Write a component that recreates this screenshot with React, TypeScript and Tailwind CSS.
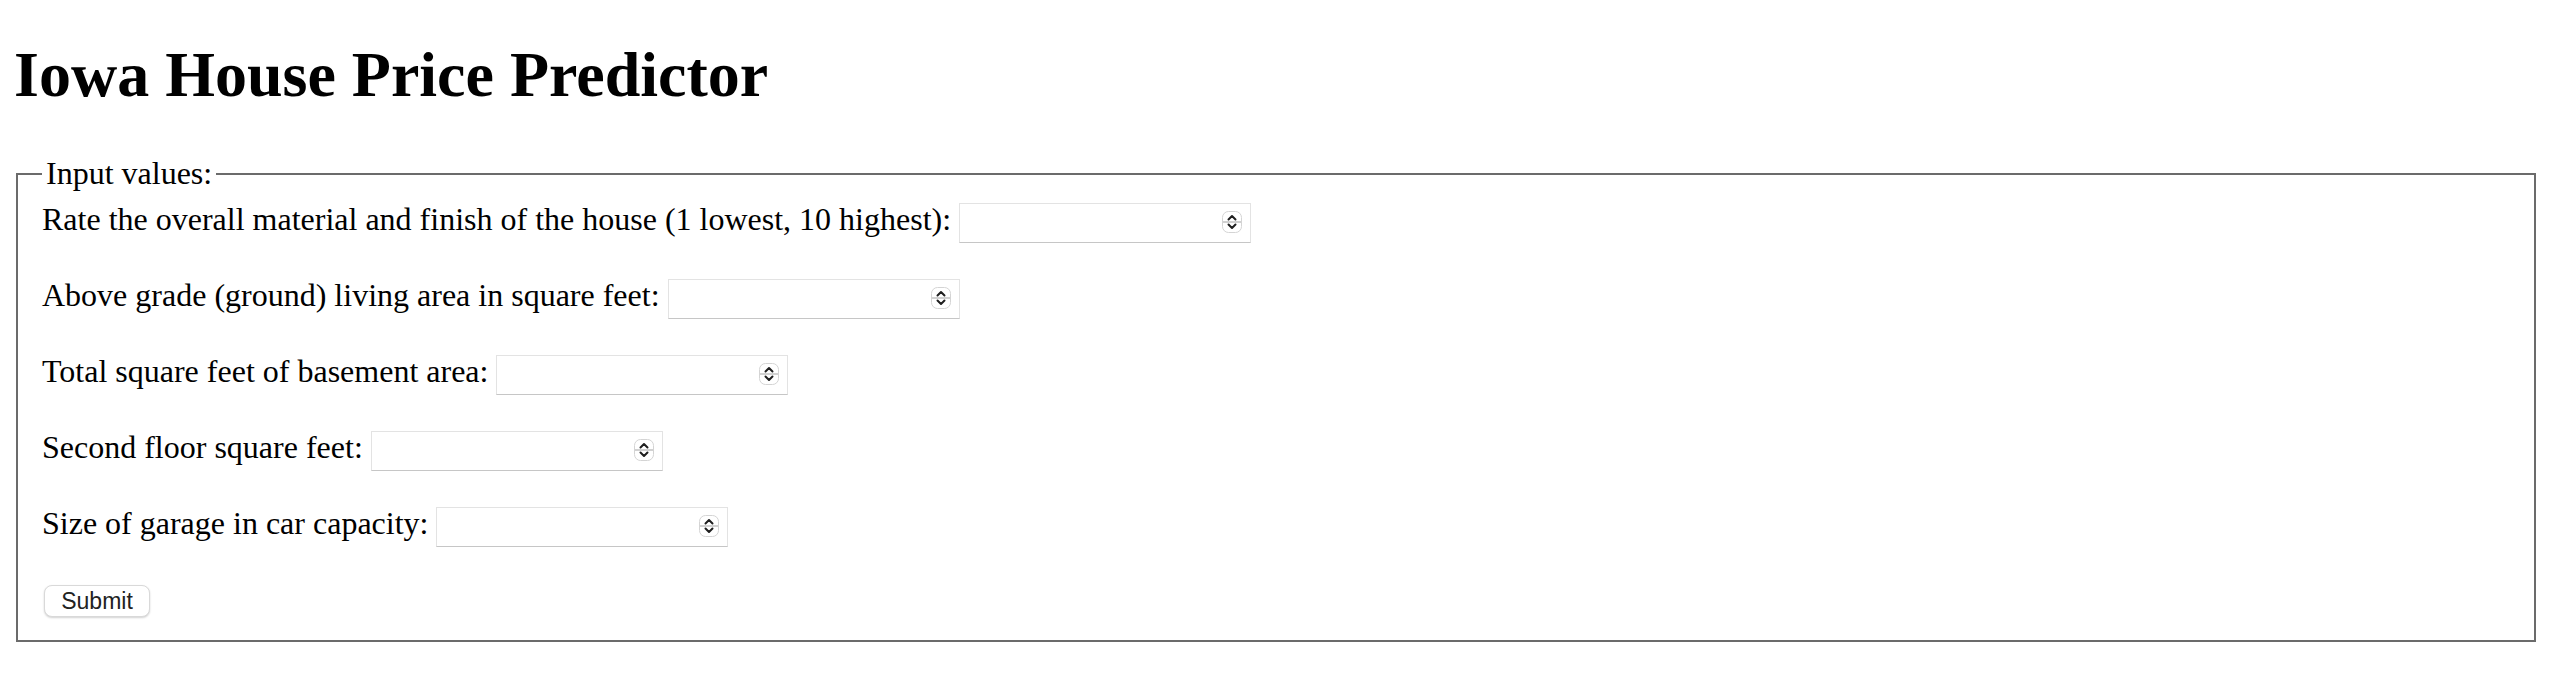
import { FormEvent, useState } from "react";

type Field = {
  name: string;
  label: string;
};

const fields: Field[] = [
  { name: "OverallQual", label: "Rate the overall material and finish of the house (1 lowest, 10 highest):" },
  { name: "GrLivArea", label: "Above grade (ground) living area in square feet:" },
  { name: "TotalBsmtSF", label: "Total square feet of basement area:" },
  { name: "2ndFlrSF", label: "Second floor square feet:" },
  { name: "GarageCars", label: "Size of garage in car capacity:" },
];

function Spinner() {
  return (
    <svg
      width="20"
      height="22"
      viewBox="0 0 20 22"
      className="pointer-events-none absolute right-[9px] top-[8px]"
    >
      <rect x="0.5" y="0.5" width="19" height="21" rx="6" fill="#ffffff" stroke="#d4d4d4" />
      <line x1="1" y1="11" x2="19" y2="11" stroke="#c2c2c2" strokeWidth="1.5" />
      <polyline
        points="6.5,8.5 10,5 13.5,8.5"
        fill="none"
        stroke="#1f1f1f"
        strokeWidth="2"
        strokeLinecap="round"
        strokeLinejoin="round"
      />
      <polyline
        points="6.5,13.5 10,17 13.5,13.5"
        fill="none"
        stroke="#1f1f1f"
        strokeWidth="2"
        strokeLinecap="round"
        strokeLinejoin="round"
      />
    </svg>
  );
}

export default function App() {
  const [values, setValues] = useState<Record<string, string>>({});

  function handleSubmit(event: FormEvent<HTMLFormElement>) {
    event.preventDefault();
  }

  return (
    <div className="min-h-screen bg-white px-[16px] pt-[38px] font-['Liberation_Serif','Times_New_Roman',serif] text-[32px] text-black">
      <h1 className="-ml-[2px] mb-[43px] text-[64px] font-bold leading-[74px]">Iowa House Price Predictor</h1>

      <form onSubmit={handleSubmit}>
        <fieldset className="border-2 border-[#6b6b6b] px-[24px] pt-[11px] pb-[23px]">
          <legend className="px-[4px] leading-[37px]">Input values:</legend>

          <div className="flex flex-col gap-[36px]">
            {fields.map((field) => (
              <div key={field.name} className="flex h-[40px] items-start gap-[8px]">
                <label htmlFor={field.name} className="whitespace-nowrap leading-[33px]">
                  {field.label}
                </label>
                <div className="relative">
                  <input
                    id={field.name}
                    name={field.name}
                    type="number"
                    value={values[field.name] ?? ""}
                    onChange={(event) => setValues({ ...values, [field.name]: event.target.value })}
                    className="block h-[40px] w-[292px] border border-[#e3e3e3] border-b-[#c6c6c6] bg-white px-[6px] font-['Liberation_Sans',sans-serif] text-[26px] outline-none [appearance:textfield] [&::-webkit-inner-spin-button]:appearance-none [&::-webkit-outer-spin-button]:appearance-none"
                  />
                  <Spinner />
                </div>
              </div>
            ))}
          </div>

          <button
            type="submit"
            className="mt-[38px] ml-[2px] block h-[32px] w-[106px] rounded-[8px] border border-[#d9d9d9] bg-white font-['Liberation_Sans',Arial,sans-serif] text-[23px] leading-[30px] text-[#222222] shadow-[0_1px_2px_rgba(0,0,0,0.18)]"
          >
            Submit
          </button>
        </fieldset>
      </form>
    </div>
  );
}
